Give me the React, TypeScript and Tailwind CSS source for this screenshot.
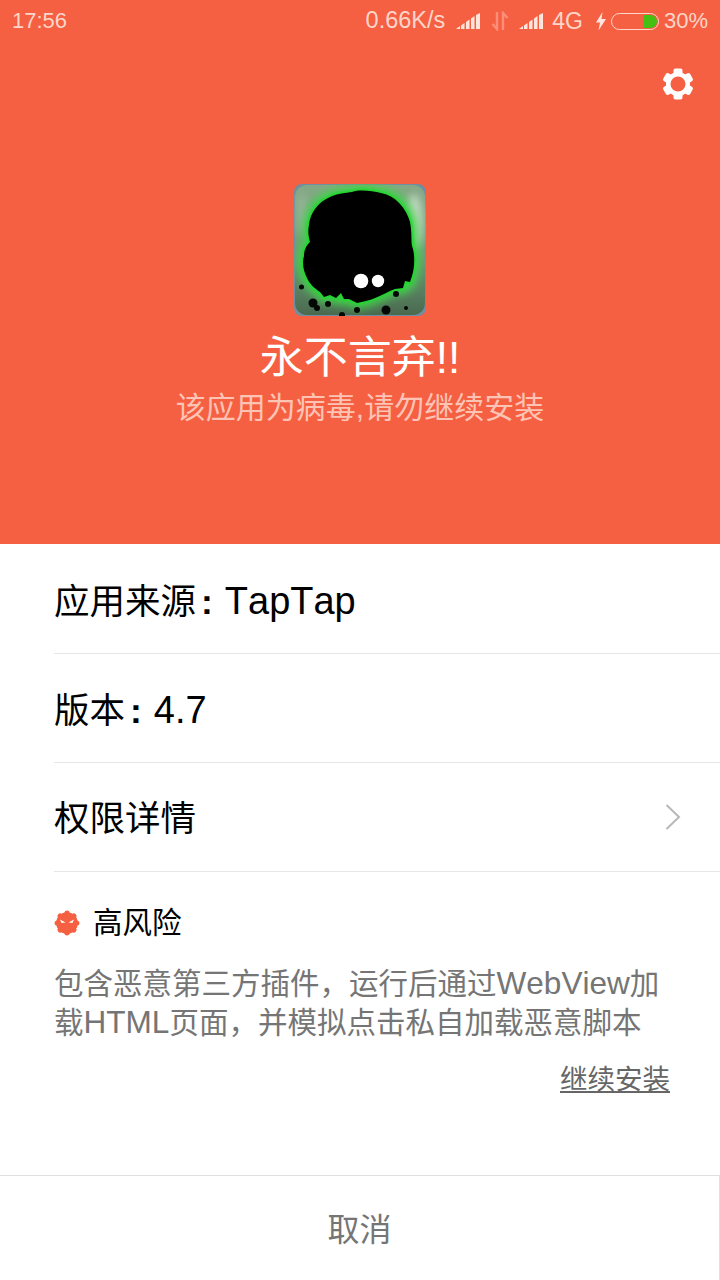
import type { ReactNode } from 'react';

const FONT = '[font-family:"Liberation_Sans","Noto_Sans_CJK_SC",sans-serif]';

// Latin runs sit a little larger than the CJK around them in the original ROM font
function Lat({ children }: { children: ReactNode }) {
	return <span className="text-[1.07em] [font-kerning:none]">{children}</span>;
}

function Colon() {
	return <span className="ml-[5px] mr-[12px] font-bold">:</span>;
}

function SignalBars() {
	return (
		<svg width="25" height="18" viewBox="0 0 25 18" className="shrink-0">
			<path d="M0 17 L4 14 V17 Z" fill="#ffe5dc" />
			<path d="M5 13.5 L8.5 11 V17 H5 Z" fill="#ffe5dc" />
			<path d="M10 10 L13.5 7.5 V17 H10 Z" fill="#ffe5dc" />
			<path d="M15 6.5 L18.5 4 V17 H15 Z" fill="#ffe5dc" />
			<path d="M20 3 L24 1 V17 H20 Z" fill="#ffe5dc" />
		</svg>
	);
}

function StatusBar() {
	return (
		<div className="flex h-10 items-center justify-between pl-3 pr-[12px] pt-[2px] text-[22px] leading-none text-[#fdd5c9]">
			<span>17:56</span>
			<div className="flex items-center">
				<span className="text-[23.5px]">0.66K/s</span>
				<div className="ml-[11px]">
					<SignalBars />
				</div>
				<svg width="18" height="20" viewBox="0 0 18 20" className="ml-[10px] shrink-0">
					<path d="M6 1 V18 L1.5 13 M12 19 V2 L16.5 7" stroke="#fb8e78" strokeWidth="2.4" fill="none" />
				</svg>
				<div className="ml-[10px]">
					<SignalBars />
				</div>
				<span className="ml-2 text-[23px]">4G</span>
				<svg width="12" height="20" viewBox="0 0 12 20" className="ml-3 shrink-0">
					<path d="M7.5 1 L1 11.5 H5 L3.5 19.5 L11 8 H6.5 Z" fill="#ffe5dc" />
				</svg>
				<div className="ml-1 flex h-[17px] w-[48px] items-center justify-end rounded-full border border-[#fdd5c9] pr-[1px]">
					<div className="h-[13px] w-[14px] rounded-l-[3px] rounded-r-full bg-[#43c012]" />
				</div>
				<span className="ml-[5px]">30%</span>
			</div>
		</div>
	);
}

function SettingsGear() {
	return (
		<svg width="32" height="32" viewBox="0 0 32 32">
			<g fill="#fff">
				{[0, 60, 120].map((a) => (
					<rect key={a} x="11.5" y="0.5" width="9" height="31" rx="2" transform={`rotate(${a} 16 16)`} />
				))}
			</g>
			<circle cx="16" cy="16" r="12" fill="#fff" />
			<circle cx="16" cy="16" r="7.5" fill="#f66042" />
		</svg>
	);
}

const BLOB =
	'M15 41 C16 29 24 18 36 13 C44 9 52 9 58 8 C66 5 78 7 87 9 C102 12 112 24 116 38 C118 48 117 56 118 62 C121 70 121 82 118 92 L116 98 L111 97 L109 104 L101 105 L96 107 C88 111 80 115 72 117 L63 119 L55 115 L50 115 L47 109 L42 114 L36 111 L30 113 L26 108 C20 104 15 99 13 94 C9 86 8 78 10 72 C10 66 12 62 16 58 C14 51 14 46 15 41 Z';

function GameIcon() {
	const specks = [
		[7.5, 103, 2.5], [19, 119, 4.5], [23, 124, 3], [34, 120, 3], [63, 126, 3],
		[92, 126, 4.5], [112, 124, 2], [102, 110, 3], [48, 131, 3],
	];
	return (
		<svg width="132" height="132" viewBox="0 0 132 132" className="shrink-0">
			<defs>
				<linearGradient id="icon-bg" x1="0" y1="0" x2="0" y2="1">
					<stop offset="0" stopColor="#86a886" />
					<stop offset="0.55" stopColor="#6f9a78" />
					<stop offset="1" stopColor="#4a6a50" />
				</linearGradient>
				<filter id="blur-lg" x="-30%" y="-30%" width="160%" height="160%">
					<feGaussianBlur stdDeviation="4" />
				</filter>
				<filter id="blur-sm" x="-30%" y="-30%" width="160%" height="160%">
					<feGaussianBlur stdDeviation="1.2" />
				</filter>
				<clipPath id="icon-clip">
					<rect width="132" height="132" rx="8" />
				</clipPath>
			</defs>
			<g clipPath="url(#icon-clip)">
				<rect width="132" height="132" fill="#6f8ea0" />
				<rect x="1" y="1" width="130" height="130" rx="12" fill="url(#icon-bg)" />
				<ellipse cx="120" cy="38" rx="9" ry="28" fill="#d2e8d2" opacity="0.8" filter="url(#blur-lg)" />
				<ellipse cx="8" cy="30" rx="6" ry="22" fill="#a5c0a5" opacity="0.6" filter="url(#blur-lg)" />
				<path d={BLOB} fill="none" stroke="#3fd24a" strokeWidth="12" filter="url(#blur-lg)" />
				<path d={BLOB} fill="none" stroke="#1fd829" strokeWidth="3.5" filter="url(#blur-sm)" />
				<path d={BLOB} fill="#000" />
				{specks.map(([x, y, r]) => (
					<circle key={`${x}-${y}`} cx={x} cy={y} r={r} fill="#040804" />
				))}
				<circle cx="67" cy="97" r="7.3" fill="#fff" />
				<circle cx="84" cy="97" r="6.2" fill="#fff" />
			</g>
		</svg>
	);
}

function RiskBadge() {
	return (
		<svg width="26" height="26" viewBox="0 0 26 26" className="shrink-0">
			<g fill="#f66042">
				<circle cx="13" cy="13" r="10.8" />
				{[0, 45, 90, 135, 180, 225, 270, 315].map((a) => (
					<circle key={a} cx="13" cy="3.2" r="2.6" transform={`rotate(${a} 13 13)`} />
				))}
			</g>
			<path d="M6 9.5 L11.5 12.5 L7.5 13 Z M20 9.5 L14.5 12.5 L18.5 13 Z" fill="#fff" />
		</svg>
	);
}

function InfoRow({ children, chevron }: { children: ReactNode; chevron?: boolean }) {
	return (
		<div className="flex h-[109px] items-center justify-between border-b border-[#e6e6e6] pr-[39px] text-[35.5px] leading-none text-black">
			<span className="pt-[5px]">{children}</span>
			{chevron && (
				<svg width="16" height="28" viewBox="0 0 16 28">
					<path d="M1.5 2 L14 14 L1.5 26" fill="none" stroke="#b8b8b8" strokeWidth="2" />
				</svg>
			)}
		</div>
	);
}

export default function App() {
	return (
		<div className={`flex h-[1280px] w-[720px] flex-col overflow-hidden bg-white ${FONT}`}>
			<div className="flex h-[544px] shrink-0 flex-col bg-[#f66042]">
				<StatusBar />
				<div className="flex justify-end pr-[26px] pt-[28px]">
					<SettingsGear />
				</div>
				<div className="mt-[84px] flex flex-col items-center">
					<GameIcon />
					<div className="mt-[16px] text-[44px] leading-[52px] text-white">永不言弃!!</div>
					<div className="mt-[4px] text-[30px] leading-[40px] text-[#fdc4b6]">该应用为病毒,请勿继续安装</div>
				</div>
			</div>

			<div className="flex-1 pl-[54px] pt-px">
				<InfoRow>
					应用来源
					<Colon />
					<Lat>TapTap</Lat>
				</InfoRow>
				<InfoRow>
					版本
					<Colon />
					<Lat>4.7</Lat>
				</InfoRow>
				<InfoRow chevron>权限详情</InfoRow>
				<div className="flex items-center gap-[13px] pt-[33px] text-[29.5px] leading-[36px] text-black">
					<RiskBadge />
					<span>高风险</span>
				</div>
				<div className="mt-[23px] w-[620px] text-[29.5px] leading-[39px] text-[#757575]">
					包含恶意第三方插件，运行后通过<Lat>WebView</Lat>加载<Lat>HTML</Lat>页面，并模拟点击私自加载恶意脚本
				</div>
				<div className="mt-[20px] pr-[50px] text-right text-[27.5px] leading-[36px] text-[#666] underline">继续安装</div>
			</div>

			<div className="flex h-[105px] shrink-0 items-center justify-center border-t border-r border-[#e0e0e0] pt-1 text-[32px] text-[#757575]">
				取消
			</div>
		</div>
	);
}
